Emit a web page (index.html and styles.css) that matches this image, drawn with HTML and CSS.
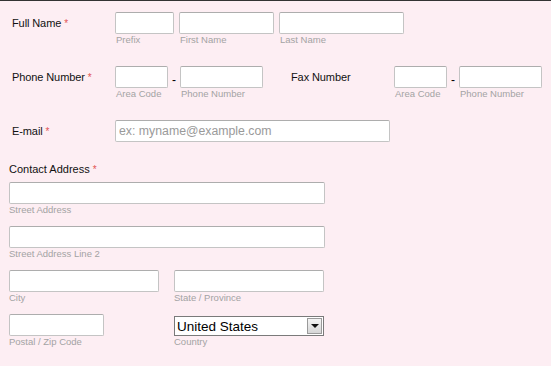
FILE: index.html
```html
<!DOCTYPE html>
<html lang="en">

<head>
    <meta charset="UTF-8">
    <meta name="viewport" content="width=device-width, initial-scale=1.0">
    <title>Contact Form</title>
    <link rel="stylesheet" href="styles.css">
</head>

<body>
    <form class="form">
        <div class="line">
            <label class="label">Full Name <span class="req">*</span></label>
            <div class="field">
                <input type="text" class="input w-prefix">
                <span class="sub">Prefix</span>
            </div>
            <div class="field">
                <input type="text" class="input w-first">
                <span class="sub">First Name</span>
            </div>
            <div class="field">
                <input type="text" class="input w-last">
                <span class="sub">Last Name</span>
            </div>
        </div>

        <div class="line row-gap">
            <label class="label">Phone Number <span class="req">*</span></label>
            <div class="field">
                <input type="text" class="input w-area">
                <span class="sub">Area Code</span>
            </div>
            <span class="dash">-</span>
            <div class="field">
                <input type="text" class="input w-phone">
                <span class="sub">Phone Number</span>
            </div>

            <label class="label fax">Fax Number</label>
            <div class="field">
                <input type="text" class="input w-area">
                <span class="sub">Area Code</span>
            </div>
            <span class="dash">-</span>
            <div class="field">
                <input type="text" class="input w-phone">
                <span class="sub">Phone Number</span>
            </div>
        </div>

        <div class="line row-gap">
            <label class="label">E-mail <span class="req">*</span></label>
            <input type="email" class="input w-email" placeholder="ex: myname@example.com">
        </div>

        <div class="address">
            <label class="title">Contact Address <span class="req">*</span></label>

            <div class="field">
                <input type="text" class="input w-street">
                <span class="sub">Street Address</span>
            </div>
            <div class="field block-gap">
                <input type="text" class="input w-street">
                <span class="sub">Street Address Line 2</span>
            </div>

            <div class="pair block-gap">
                <div class="field">
                    <input type="text" class="input w-half">
                    <span class="sub">City</span>
                </div>
                <div class="field">
                    <input type="text" class="input w-half">
                    <span class="sub">State / Province</span>
                </div>
            </div>

            <div class="pair block-gap">
                <div class="field">
                    <input type="text" class="input w-zip">
                    <span class="sub">Postal / Zip Code</span>
                </div>
                <div class="field">
                    <div class="select">
                        <select>
                            <option>United States</option>
                        </select>
                        <span class="arrow"></span>
                    </div>
                    <span class="sub">Country</span>
                </div>
            </div>
        </div>
    </form>
</body>

</html>
```

FILE: styles.css
```css
body {
    font-family: "Liberation Sans", Arial, sans-serif;
    background-color: #fdeef3;
    margin: 0;
    border-top: 1px solid #333;
    min-height: 365px;
}

.form {
    padding-top: 11px;
}

.line {
    display: flex;
    align-items: flex-start;
}

.row-gap {
    margin-top: 20px;
}

.label {
    width: 103px;
    padding-left: 12px;
    font-size: 11px;
    line-height: 22px;
    color: #111;
    letter-spacing: -0.1px;
}

.label.fax {
    width: 103px;
    padding-left: 0;
    margin-left: 28px;
}

.req {
    color: #e25555;
    font-size: 10px;
}

.field {
    display: flex;
    flex-direction: column;
    margin-right: 5px;
}

.input {
    height: 22px;
    box-sizing: border-box;
    margin: 0;
    padding: 0 3px;
    border: 1px solid #c4c4c4;
    border-top-color: #adadad;
    border-radius: 2px;
    background-color: #fff;
    font-family: "Liberation Sans", Arial, sans-serif;
    font-size: 12px;
}

.input::placeholder {
    color: #9a9a9a;
}

.sub {
    font-size: 9.5px;
    line-height: 12px;
    color: #a3a3a3;
}

.line .sub {
    padding-left: 1px;
}

.dash {
    width: 12px;
    margin-left: -5px;
    text-align: center;
    font-size: 12px;
    line-height: 22px;
    padding-top: 3px;
}

.w-prefix { width: 59px; }
.w-first { width: 95px; }
.w-last { width: 125px; }
.w-area { width: 53px; }
.w-phone { width: 83px; }
.w-email { width: 275px; font-size: 12.3px; }
.w-street { width: 316px; }
.w-half { width: 150px; }
.w-zip { width: 95px; }

.line .field:has(.w-phone) {
    margin-right: 0;
}

.address {
    margin-top: 19px;
    padding-left: 9px;
}

.title {
    display: block;
    font-size: 11px;
    line-height: 14px;
    color: #111;
    margin-bottom: 5px;
}

.block-gap {
    margin-top: 10px;
}

.pair {
    display: grid;
    grid-template-columns: 165px auto;
    justify-content: start;
}

.pair .field {
    margin-right: 0;
}

.select {
    display: flex;
    align-items: center;
    width: 150px;
    height: 20px;
    margin-top: 2px;
    box-sizing: border-box;
    border: 1px solid #7a7a7a;
    background-color: #fff;
}

.select select {
    flex: 1;
    min-width: 0;
    appearance: none;
    border: none;
    background: transparent;
    padding: 0 2px;
    font-family: "Liberation Sans", Arial, sans-serif;
    font-size: 13.5px;
    color: #000;
    outline: none;
}

.arrow {
    position: relative;
    width: 15px;
    height: 16px;
    margin-right: 1px;
    box-sizing: border-box;
    border: 1px solid #9a9a9a;
    background: linear-gradient(#f4f4f4, #d6d6d6);
}

.arrow::after {
    content: "";
    position: absolute;
    left: 3px;
    top: 5px;
    border-left: 4px solid transparent;
    border-right: 4px solid transparent;
    border-top: 4px solid #111;
}
```
